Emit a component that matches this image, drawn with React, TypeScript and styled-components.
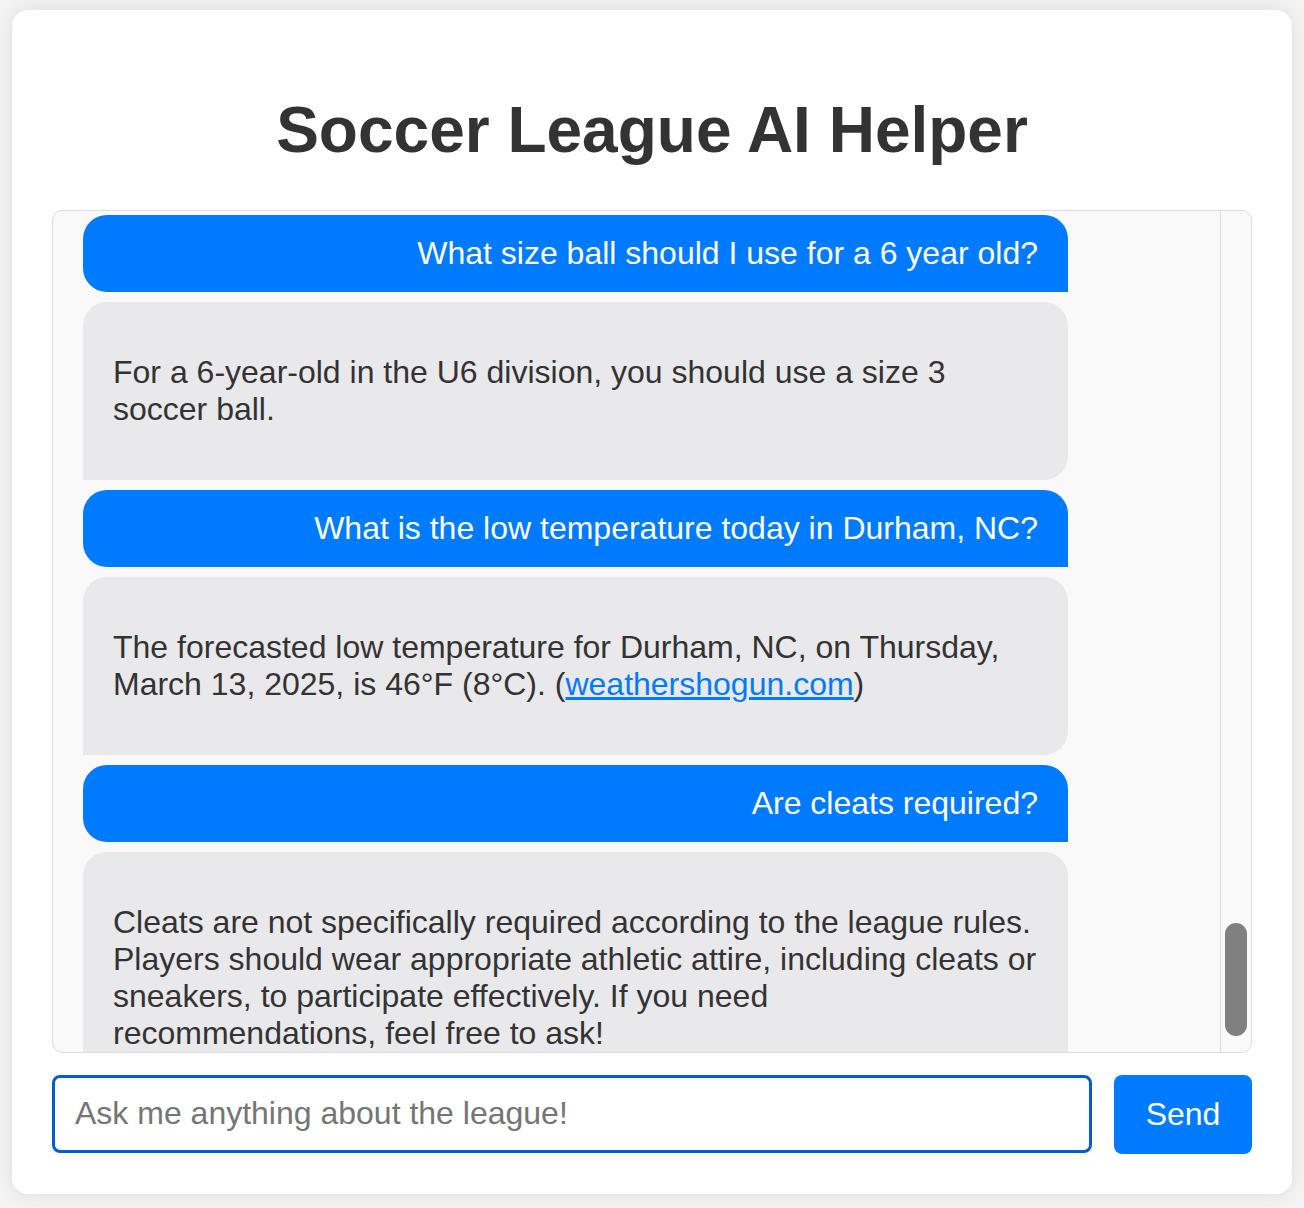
import React from "react";
import styled, { createGlobalStyle } from "styled-components";

const GlobalStyle = createGlobalStyle`
  html, body {
    margin: 0;
    padding: 0;
    background: #f4f4f4;
    font-family: "Liberation Sans", Arial, Helvetica, sans-serif;
    color: #333;
  }
  * { box-sizing: border-box; }
`;

const Card = styled.div`
  max-width: 1280px;
  margin: 10px auto 13px;
  background: #fff;
  border-radius: 16px;
  box-shadow: 0 0 20px rgba(0, 0, 0, 0.1);
  padding: 40px;
  display: flex;
  flex-direction: column;
`;

const Title = styled.h1`
  margin: 42.88px 0;
  font-size: 64px;
  font-weight: 700;
  text-align: center;
  color: #333;
  line-height: normal;
`;

const ChatBox = styled.div`
  height: 843px;
  border: 1px solid #ddd;
  border-radius: 10px;
  background: #f9f9f9;
  display: flex;
  overflow: hidden;
`;

const Messages = styled.div`
  flex: 1;
  overflow: hidden;
  padding: 4px 30px 0;
  display: flex;
  flex-direction: column;
  gap: 10px;
`;

const Bubble = styled.div<{ $user?: boolean }>`
  flex: none;
  width: 985px;
  padding: 20px 30px;
  font-size: 32px;
  line-height: normal;
  background: ${(p) => (p.$user ? "#007bff" : "#e9e9eb")};
  color: ${(p) => (p.$user ? "#fff" : "#333")};
  text-align: ${(p) => (p.$user ? "right" : "left")};
  border-radius: ${(p) => (p.$user ? "24px 24px 0 24px" : "24px 24px 24px 0")};
`;

const Para = styled.p`
  margin: 32px 0;
`;

const Link = styled.a`
  color: #007bff;
  text-decoration: underline;
`;

const Track = styled.div`
  width: 31px;
  flex: none;
  border-left: 1px solid #dcdcdc;
  background: #f9f9f9;
  display: flex;
  flex-direction: column;
  justify-content: flex-end;
  align-items: center;
  padding: 0 0 16px 0;
`;

const Thumb = styled.div`
  width: 22px;
  height: 113px;
  border-radius: 11px;
  background: #808080;
`;

const InputRow = styled.div`
  margin-top: 22px;
  display: flex;
  gap: 22px;
  align-items: stretch;
`;

const Input = styled.input`
  flex: 1;
  height: 78px;
  padding: 0 20px;
  font-size: 32px;
  font-family: "Liberation Sans", Arial, Helvetica, sans-serif;
  border: 3px solid #005fcc;
  border-radius: 8px;
  outline: none;
  color: #333;
  &::placeholder {
    color: #757575;
  }
`;

const SendButton = styled.button`
  width: 138px;
  height: 79px;
  border: none;
  border-radius: 8px;
  background: #007bff;
  color: #fff;
  font-size: 32px;
  font-family: "Liberation Sans", Arial, Helvetica, sans-serif;
  cursor: pointer;
`;

type Msg = { user: boolean; content: React.ReactNode };

const messages: Msg[] = [
  { user: true, content: "What size ball should I use for a 6 year old?" },
  {
    user: false,
    content: (
      <Para>For a 6-year-old in the U6 division, you should use a size 3 soccer ball.</Para>
    ),
  },
  { user: true, content: "What is the low temperature today in Durham, NC?" },
  {
    user: false,
    content: (
      <Para>
        The forecasted low temperature for Durham, NC, on Thursday, March 13, 2025, is 46°F
        (8°C). (<Link href="#">weathershogun.com</Link>)
      </Para>
    ),
  },
  { user: true, content: "Are cleats required?" },
  {
    user: false,
    content: (
      <Para>
        Cleats are not specifically required according to the league rules. Players should wear
        appropriate athletic attire, including cleats or sneakers, to participate effectively. If
        you need recommendations, feel free to ask!
      </Para>
    ),
  },
];

export default function App() {
  return (
    <>
      <GlobalStyle />
      <Card>
        <Title>Soccer League AI Helper</Title>
        <ChatBox>
          <Messages>
            {messages.map((m, i) => (
              <Bubble key={i} $user={m.user}>
                {m.content}
              </Bubble>
            ))}
          </Messages>
          <Track>
            <Thumb />
          </Track>
        </ChatBox>
        <InputRow>
          <Input placeholder="Ask me anything about the league!" autoFocus />
          <SendButton>Send</SendButton>
        </InputRow>
      </Card>
    </>
  );
}
